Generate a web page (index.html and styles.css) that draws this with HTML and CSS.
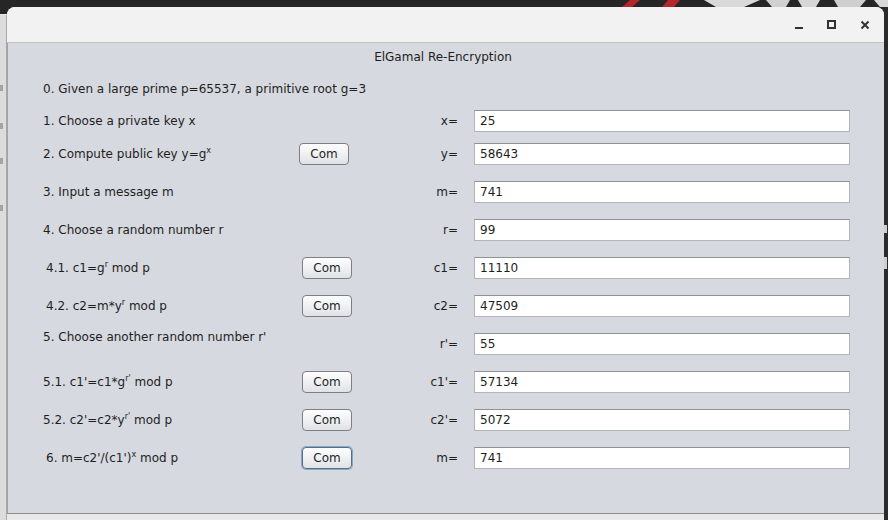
FILE: index.html
```html
<!DOCTYPE html>
<html>
<head>
<meta charset="utf-8">
<title>ElGamal Re-Encryption</title>
<link rel="stylesheet" href="styles.css">
</head>
<body>
<div class="desktop">
  <div class="wallpaper">
    <svg width="888" height="7" viewBox="0 0 888 7">
      <rect width="888" height="7" fill="#262626"/>
      <polygon points="622,7 630,0 640,0 632,7" fill="#b3262b"/>
      <polygon points="662,7 668,0 680,0 674,7" fill="#b3262b"/>
      <polygon points="704,0 716,7 744,7 760,0" fill="#d9d9d9"/>
      <polygon points="766,0 772,7 786,7 790,0" fill="#d0d0d0"/>
      <polygon points="798,0 802,7 816,7 820,0" fill="#d6d6d6"/>
      <polygon points="834,0 838,7 860,7 866,0" fill="#cfcfcf"/>
      <polygon points="874,0 880,7 888,7 888,0" fill="#d9d9d9"/>
    </svg>
  </div>
  <div class="leftstrip">
    <span class="tick t1"></span>
    <span class="tick t2"></span>
    <span class="tick t3"></span>
    <span class="tick t4"></span>
  </div>
  <div class="window">
    <div class="titlebar">
      <svg class="ctl" width="16" height="16" viewBox="0 0 16 16"><rect x="4" y="10" width="8" height="2" fill="#2e3436"/></svg>
      <svg class="ctl" width="16" height="16" viewBox="0 0 16 16"><rect x="4" y="4" width="7" height="7" fill="none" stroke="#2e3436" stroke-width="2"/></svg>
      <svg class="ctl" width="16" height="16" viewBox="0 0 16 16"><path d="M4.5 4.5 L11.5 11.5 M11.5 4.5 L4.5 11.5" stroke="#2e3436" stroke-width="2" fill="none"/></svg>
    </div>
    <div class="panel">
      <div class="heading">ElGamal Re-Encryption</div>

      <div class="row row0">
        <span class="txt">0. Given a large prime p=65537, a primitive root g=3</span>
      </div>

      <div class="row row1">
        <span class="txt">1. Choose a private key x</span>
        <span></span>
        <span class="lbl">x=</span>
        <input class="field" type="text" value="25">
      </div>

      <div class="row row2">
        <span class="txt">2. Compute public key y=g<sup>x</sup></span>
        <span><button class="btn btn-left">Com</button></span>
        <span class="lbl">y=</span>
        <input class="field" type="text" value="58643">
      </div>

      <div class="row">
        <span class="txt">3. Input a message m</span>
        <span></span>
        <span class="lbl">m=</span>
        <input class="field" type="text" value="741">
      </div>

      <div class="row">
        <span class="txt">4. Choose a random number r</span>
        <span></span>
        <span class="lbl">r=</span>
        <input class="field" type="text" value="99">
      </div>

      <div class="row">
        <span class="txt ind">4.1. c1=g<sup>r</sup> mod p</span>
        <span><button class="btn">Com</button></span>
        <span class="lbl">c1=</span>
        <input class="field" type="text" value="11110">
      </div>

      <div class="row">
        <span class="txt ind">4.2. c2=m*y<sup>r</sup> mod p</span>
        <span><button class="btn">Com</button></span>
        <span class="lbl">c2=</span>
        <input class="field" type="text" value="47509">
      </div>

      <div class="row">
        <span class="txt raised">5. Choose another random number r'</span>
        <span></span>
        <span class="lbl">r'=</span>
        <input class="field" type="text" value="55">
      </div>

      <div class="row">
        <span class="txt">5.1. c1'=c1*g<sup>r'</sup> mod p</span>
        <span><button class="btn">Com</button></span>
        <span class="lbl">c1'=</span>
        <input class="field" type="text" value="57134">
      </div>

      <div class="row">
        <span class="txt">5.2. c2'=c2*y<sup>r'</sup> mod p</span>
        <span><button class="btn">Com</button></span>
        <span class="lbl">c2'=</span>
        <input class="field" type="text" value="5072">
      </div>

      <div class="row">
        <span class="txt ind">6. m=c2'/(c1')<sup>x</sup> mod p</span>
        <span><button class="btn focused">Com</button></span>
        <span class="lbl">m=</span>
        <input class="field" type="text" value="741">
      </div>
    </div>
  </div>
  <div class="rightstrip">
    <span class="mark m1"></span>
    <span class="mark m2"></span>
  </div>
  <div class="bottomstrip"></div>
</div>
</body>
</html>
```

FILE: styles.css
```css
html, body {
  margin: 0;
  padding: 0;
}

body {
  width: 888px;
  height: 520px;
  overflow: hidden;
  font-family: "DejaVu Sans", "Liberation Sans", sans-serif;
  font-size: 12px;
  color: #1e1e1e;
}

.desktop {
  display: grid;
  grid-template-columns: 7px 877px 4px;
  grid-template-rows: 7px 507px 6px;
  width: 888px;
  height: 520px;
  background: linear-gradient(to bottom, #262626 0, #262626 14px, #e6e6e6 14px);
}

.wallpaper {
  grid-column: 1 / 4;
  grid-row: 1;
  height: 7px;
  overflow: hidden;
}

.wallpaper svg {
  display: block;
}

.leftstrip {
  grid-column: 1;
  grid-row: 2 / 4;
  background: #dcdcdc;
  border-right: 1px solid #a9a9a9;
  box-sizing: border-box;
  display: flex;
  flex-direction: column;
  overflow: hidden;
  margin-top: 8px;
}

.tick {
  display: block;
  width: 3px;
  height: 6px;
  background: #a5a5a5;
}

.t1 { margin-top: 70px; }
.t2 { margin-top: 32px; }
.t3 { margin-top: 29px; }
.t4 { margin-top: 41px; }

.window {
  grid-column: 2;
  grid-row: 2;
  display: flex;
  flex-direction: column;
  background: #f2f2f2;
  border-radius: 8px 8px 0 0;
  overflow: hidden;
  border-bottom: 1px solid #8f8f8f;
  box-sizing: border-box;
}

.titlebar {
  height: 35px;
  flex: none;
  display: flex;
  align-items: center;
  justify-content: flex-end;
  gap: 17px;
  padding-right: 11px;
  border-bottom: 1px solid #c2c2c2;
  background: #f2f2f2;
}

.ctl {
  display: block;
}

.panel {
  flex: 1;
  background: #d6d9df;
  border-left: 1px solid #a3a3a3;
  padding: 7px 0 0 35px;
}

.heading {
  line-height: 14px;
  height: 14px;
  text-align: center;
  padding-right: 41px;
}

.row {
  display: grid;
  grid-template-columns: 259px 53px 119px 376px;
  align-items: center;
  height: 22px;
  margin-top: 16px;
  line-height: 14px;
  white-space: nowrap;
}

.row0 { margin-top: 14px; }
.row1 { margin-top: 10px; }
.row2 { margin-top: 11px; }

.txt {
  display: block;
}

.ind {
  padding-left: 3px;
}

.raised {
  align-self: start;
  margin-top: -3px;
}

sup {
  font-size: 8px;
  line-height: 0;
  vertical-align: 5px;
}

.lbl {
  text-align: right;
  padding-right: 16px;
}

.field {
  box-sizing: border-box;
  width: 376px;
  height: 22px;
  margin: 0;
  padding: 0 5px;
  border: 1px solid #b1b4b8;
  border-top-color: #8e9195;
  background: #ffffff;
  font-family: "DejaVu Sans", "Liberation Sans", sans-serif;
  font-size: 12px;
  color: #1e1e1e;
  outline: none;
}

.btn {
  display: block;
  box-sizing: border-box;
  width: 50px;
  height: 22px;
  margin: 0;
  padding: 0;
  border: 1px solid #7d7f83;
  border-radius: 4px;
  background: linear-gradient(to bottom, #fdfdfe 0%, #f1f2f4 45%, #dfe2e6 100%);
  font-family: "DejaVu Sans", "Liberation Sans", sans-serif;
  font-size: 12px;
  color: #1e1e1e;
}

.btn-left {
  margin-left: -3px;
}

.focused {
  border-color: #5d6b7b;
  box-shadow: 0 0 0 1px #80a9d4;
}

.rightstrip {
  grid-column: 3;
  grid-row: 2 / 4;
  background: #2b2b2b;
  display: flex;
  flex-direction: column;
}

.mark {
  display: block;
  width: 3px;
  background: #cfcfcf;
}

.m1 { height: 8px; margin-top: 218px; }
.m2 { height: 12px; margin-top: 24px; }

.bottomstrip {
  grid-column: 2;
  grid-row: 3;
  background: #e9e9e9;
}
```
